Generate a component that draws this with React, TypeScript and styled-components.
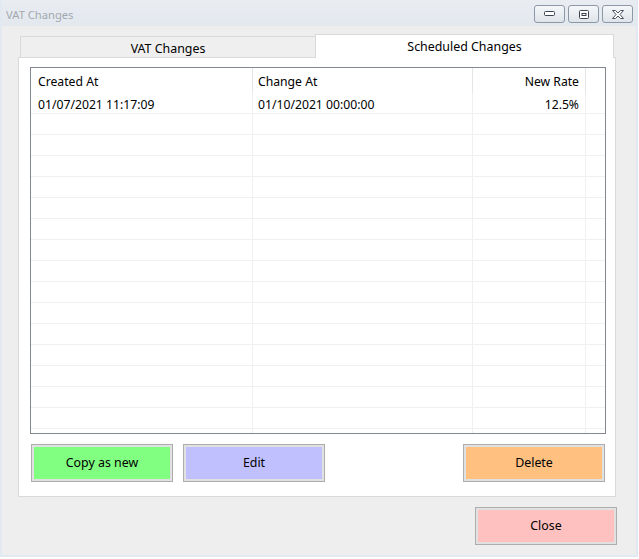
import React from "react";
import styled, { createGlobalStyle } from "styled-components";

const GlobalStyle = createGlobalStyle`
  * { box-sizing: border-box; }
  html, body { margin: 0; padding: 0; background: #ffffff; }
  body { font-family: "Noto Sans", "Segoe UI", sans-serif; font-size: 12px; color: #000; }
`;

const Window = styled.div`
  width: 638px;
  height: 557px;
  background: #e3e9f0;
  padding: 0 2px 2px 2px;
  display: flex;
  flex-direction: column;
`;

const TitleBar = styled.div`
  height: 26px;
  display: flex;
  align-items: flex-start;
  justify-content: space-between;
  padding: 0 3px 0 4px;
  background: linear-gradient(#e9edf2, #e3e8ef);
`;

const TitleText = styled.div`
  margin-top: 7px;
  font-size: 11.2px;
  color: #a3a8ae;
  line-height: 16px;
`;

const Controls = styled.div`
  display: flex;
  gap: 3px;
  margin-top: 5px;
`;

const CaptionButton = styled.div`
  width: 31px;
  height: 18px;
  border: 1px solid #8d98a7;
  border-radius: 3px;
  background: linear-gradient(#f5f7f9, #dfe4ea);
  display: flex;
  align-items: center;
  justify-content: center;
`;

const Client = styled.div`
  flex: 1;
  background: #eeeeee;
  display: flex;
  flex-direction: column;
  padding: 8px 20px 10px 16px;
`;

const TabControl = styled.div`
  height: 463px;
  display: flex;
  flex-direction: column;
`;

const TabStrip = styled.div`
  height: 23px;
  display: flex;
  align-items: flex-end;
  padding-left: 2px;
`;

const Tab = styled.div<{ $active?: boolean; $width: number }>`
  width: ${(p) => p.$width}px;
  height: ${(p) => (p.$active ? 24 : 21)}px;
  border: 1px solid #d9d9d9;
  border-bottom: none;
  background: ${(p) => (p.$active ? "#ffffff" : "#efefef")};
  margin-bottom: ${(p) => (p.$active ? -1 : 0)}px;
  margin-left: ${(p) => (p.$active ? -1 : 0)}px;
  position: relative;
  z-index: ${(p) => (p.$active ? 1 : 0)};
  display: flex;
  align-items: center;
  justify-content: center;
  padding-top: ${(p) => (p.$active ? 0 : 2)}px;
  font-size: 12.4px;
  color: #000;
  white-space: nowrap;
`;

const Pane = styled.div`
  flex: 1;
  border: 1px solid #d9d9d9;
  background: #ffffff;
  display: flex;
  flex-direction: column;
  padding: 9px 9px 14px 11px;
`;

const Grid = styled.div`
  height: 367px;
  border: 1px solid #828790;
  display: flex;
  flex-direction: column;
  overflow: hidden;
`;

const HeaderRow = styled.div`
  height: 25px;
  flex: none;
  display: flex;
`;

const HeaderCell = styled.div<{ $width?: number; $right?: boolean; $pad?: number }>`
  ${(p) => (p.$width ? `width: ${p.$width}px; flex: none;` : "flex: 1;")}
  border-right: ${(p) => (p.$width ? "1px solid #e5e5e5" : "none")};
  display: flex;
  align-items: center;
  justify-content: ${(p) => (p.$right ? "flex-end" : "flex-start")};
  padding: 2px 6px 0 ${(p) => p.$pad ?? 7}px;
  font-size: 12.2px;
  white-space: nowrap;
`;

const Row = styled.div`
  height: 21px;
  flex: none;
  display: flex;
  border-bottom: 1px solid #f0f0f0;
`;

const Cell = styled.div<{ $width?: number; $right?: boolean; $pad?: number }>`
  ${(p) => (p.$width ? `width: ${p.$width}px; flex: none;` : "flex: 1;")}
  border-right: ${(p) => (p.$width ? "1px solid #f0f0f0" : "none")};
  display: flex;
  align-items: center;
  justify-content: ${(p) => (p.$right ? "flex-end" : "flex-start")};
  padding: 2px 6px 0 ${(p) => p.$pad ?? 7}px;
  font-size: 12.2px;
  white-space: nowrap;
`;

const ButtonRow = styled.div`
  display: flex;
  gap: 10px;
  margin-top: 10px;
  padding: 0 1px;
`;

const ActionButton = styled.div<{ $bg: string; $push?: boolean }>`
  width: 142px;
  height: 38px;
  flex: none;
  border: 1px solid #adadad;
  box-shadow: inset 0 0 0 2px #e1e1e1;
  background: ${(p) => p.$bg};
  display: flex;
  align-items: center;
  justify-content: center;
  padding-bottom: 2px;
  font-size: 12.4px;
  color: #000;
  ${(p) => (p.$push ? "margin-left: auto;" : "")}
`;

const CloseButton = styled(ActionButton)`
  align-self: flex-end;
  margin-top: 10px;
  margin-right: -1px;
`;

const columns = [
  { key: "created", label: "Created At", width: 222, right: false, pad: 7 },
  { key: "change", label: "Change At", width: 220, right: false, pad: 5 },
  { key: "rate", label: "New Rate", width: 113, right: true, pad: 5 },
];

const rows: Record<string, string>[] = [
  { created: "01/07/2021 11:17:09", change: "01/10/2021 00:00:00", rate: "12.5%" },
];

const MinIcon = () => (
  <svg width="11" height="6" viewBox="0 0 11 6">
    <rect x="0.5" y="0.5" width="10" height="4" rx="1" fill="#fff" stroke="#3c4450" />
  </svg>
);

const MaxIcon = () => (
  <svg width="10" height="9" viewBox="0 0 10 9">
    <rect x="0.5" y="0.5" width="9" height="8" rx="1" fill="#fff" stroke="#3c4450" />
    <rect x="2.5" y="3" width="5" height="3" fill="#3c4450" />
    <rect x="3.5" y="4" width="3" height="1" fill="#fff" />
  </svg>
);

const CloseIcon = () => (
  <svg width="14" height="11" viewBox="0 0 14 11">
    <path
      d="M1.5 1.5 H4.5 L7 4 L9.5 1.5 H12.5 L9 5.5 L12.5 9.5 H9.5 L7 7 L4.5 9.5 H1.5 L5 5.5 Z"
      fill="#fff"
      stroke="#4a5260"
      strokeWidth="1"
      strokeLinejoin="round"
    />
  </svg>
);

export default function App() {
  const blank = 16 - rows.length;
  return (
    <>
      <GlobalStyle />
      <Window>
        <TitleBar>
          <TitleText>VAT Changes</TitleText>
          <Controls>
            <CaptionButton><MinIcon /></CaptionButton>
            <CaptionButton><MaxIcon /></CaptionButton>
            <CaptionButton><CloseIcon /></CaptionButton>
          </Controls>
        </TitleBar>
        <Client>
          <TabControl>
            <TabStrip>
              <Tab $width={296}>VAT Changes</Tab>
              <Tab $active $width={299}>Scheduled Changes</Tab>
            </TabStrip>
            <Pane>
              <Grid>
                <HeaderRow>
                  {columns.map((c) => (
                    <HeaderCell key={c.key} $width={c.width} $right={c.right} $pad={c.pad}>{c.label}</HeaderCell>
                  ))}
                  <HeaderCell />
                </HeaderRow>
                {rows.map((r, i) => (
                  <Row key={i}>
                    {columns.map((c) => (
                      <Cell key={c.key} $width={c.width} $right={c.right} $pad={c.pad}>{r[c.key]}</Cell>
                    ))}
                    <Cell />
                  </Row>
                ))}
                {Array.from({ length: blank + 1 }).map((_, i) => (
                  <Row key={`b${i}`}>
                    {columns.map((c) => (
                      <Cell key={c.key} $width={c.width} />
                    ))}
                    <Cell />
                  </Row>
                ))}
              </Grid>
              <ButtonRow>
                <ActionButton $bg="#80ff80">Copy as new</ActionButton>
                <ActionButton $bg="#c0c0ff">Edit</ActionButton>
                <ActionButton $bg="#ffc080" $push>Delete</ActionButton>
              </ButtonRow>
            </Pane>
          </TabControl>
          <CloseButton $bg="#ffc0c0">Close</CloseButton>
        </Client>
      </Window>
    </>
  );
}
